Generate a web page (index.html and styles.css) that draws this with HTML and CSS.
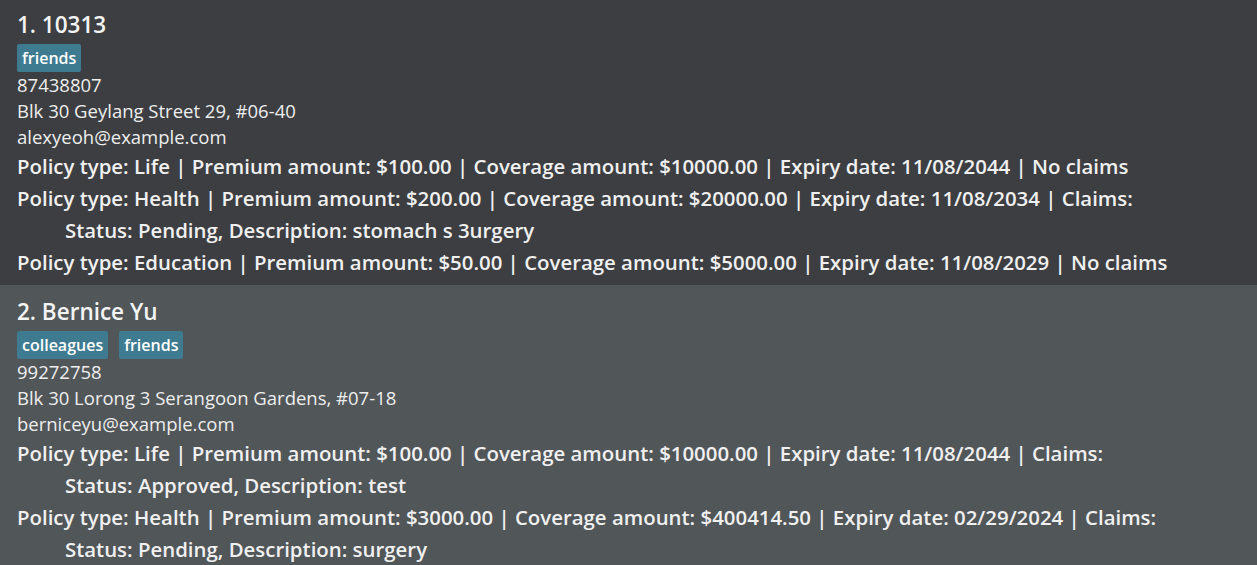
FILE: index.html
```html
<!DOCTYPE html>
<html>
<head>
<meta charset="utf-8">
<link rel="stylesheet" href="styles.css">
</head>
<body>
<div class="list">
  <div class="card card-dark">
    <div class="name">1. 10313</div>
    <div class="tags"><span class="tag">friends</span></div>
    <div class="detail">87438807</div>
    <div class="detail">Blk 30 Geylang Street 29, #06-40</div>
    <div class="detail">alexyeoh@example.com</div>
    <div class="policy">Policy type: Life | Premium amount: $100.00 | Coverage amount: $10000.00 | Expiry date: 11/08/2044 | No claims</div>
    <div class="policy">Policy type: Health | Premium amount: $200.00 | Coverage amount: $20000.00 | Expiry date: 11/08/2034 | Claims:</div>
    <div class="policy claim">Status: Pending, Description: stomach s 3urgery</div>
    <div class="policy">Policy type: Education | Premium amount: $50.00 | Coverage amount: $5000.00 | Expiry date: 11/08/2029 | No claims</div>
  </div>
  <div class="card card-light">
    <div class="name">2. Bernice Yu</div>
    <div class="tags"><span class="tag">colleagues</span><span class="tag">friends</span></div>
    <div class="detail">99272758</div>
    <div class="detail">Blk 30 Lorong 3 Serangoon Gardens, #07-18</div>
    <div class="detail">berniceyu@example.com</div>
    <div class="policy">Policy type: Life | Premium amount: $100.00 | Coverage amount: $10000.00 | Expiry date: 11/08/2044 | Claims:</div>
    <div class="policy claim">Status: Approved, Description: test</div>
    <div class="policy">Policy type: Health | Premium amount: $3000.00 | Coverage amount: $400414.50 | Expiry date: 02/29/2024 | Claims:</div>
    <div class="policy claim">Status: Pending, Description: surgery</div>
  </div>
</div>
</body>
</html>
```
FILE: styles.css
```css
html, body {
  margin: 0;
  padding: 0;
  background: #515659;
  overflow: hidden;
}
body {
  font-family: "Open Sans", "Noto Sans", sans-serif;
  color: #eeeeee;
}
.list {
  display: flex;
  flex-direction: column;
}
.card {
  display: flex;
  flex-direction: column;
  align-items: flex-start;
  padding: 0 0 0 17px;
}
.card-dark {
  background: #3c3e41;
  height: 285px;
  box-sizing: border-box;
  padding-top: 10px;
}
.card-light {
  background: #515659;
  padding-top: 12px;
}
.name {
  font-size: 22.5px;
  font-weight: 600;
  line-height: 30px;
  color: #f4f4f4;
}
.tags {
  display: flex;
  gap: 11px;
  margin-top: 4px;
}
.tag {
  background: #3e7b91;
  color: #ffffff;
  font-size: 16px;
  font-weight: 600;
  line-height: 28px;
  padding: 0 5px;
  border-radius: 2px;
}
.detail {
  font-size: 18.5px;
  font-weight: 400;
  line-height: 26px;
}
.policy {
  font-size: 20.4px;
  font-weight: 600;
  line-height: 32px;
  color: #f0f0f0;
}
.claim {
  padding-left: 48px;
}
```
